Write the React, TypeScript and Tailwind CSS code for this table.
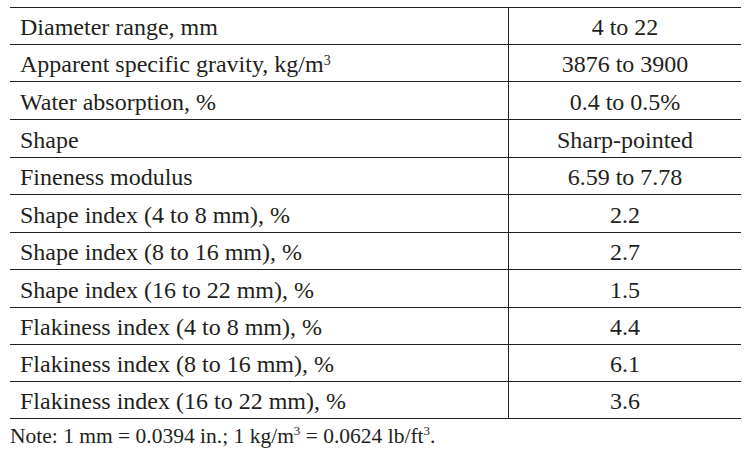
const rows = [
  { label: 'Diameter range, mm', value: '4 to 22', h: 'h-[37px]' },
  { label: 'Apparent specific gravity, kg/m', sup: '3', value: '3876 to 3900', h: 'h-[37px]' },
  { label: 'Water absorption, %', value: '0.4 to 0.5%', h: 'h-[38px]' },
  { label: 'Shape', value: 'Sharp-pointed', h: 'h-[38px]' },
  { label: 'Fineness modulus', value: '6.59 to 7.78', h: 'h-[37px]' },
  { label: 'Shape index (4 to 8 mm), %', value: '2.2', h: 'h-[38px]' },
  { label: 'Shape index (8 to 16 mm), %', value: '2.7', h: 'h-[37px]' },
  { label: 'Shape index (16 to 22 mm), %', value: '1.5', h: 'h-[38px]' },
  { label: 'Flakiness index (4 to 8 mm), %', value: '4.4', h: 'h-[37px]' },
  { label: 'Flakiness index (8 to 16 mm), %', value: '6.1', h: 'h-[37px]' },
  { label: 'Flakiness index (16 to 22 mm), %', value: '3.6', h: 'h-[37px]' },
];

export default function App() {
  return (
    <div className="w-[756px] h-[457px] bg-white text-[#231f20] [font-family:'Liberation_Serif',serif] pt-[7px] pl-[10px]">
      <div className="w-[731px] border-t border-[#231f20]">
        {rows.map((r) => (
          <div key={r.label} className={`flex border-b border-[#231f20] ${r.h}`}>
            <div className="w-[499px] border-r border-[#231f20] pl-[10px] flex items-center text-[24px] leading-none pt-[2px] whitespace-nowrap">
              <span>
                {r.label}
                {r.sup && <sup className="text-[14px]">{r.sup}</sup>}
              </span>
            </div>
            <div className="flex-1 flex items-center justify-center text-[24px] leading-none pt-[2px] whitespace-nowrap">
              {r.value}
            </div>
          </div>
        ))}
      </div>
      <p className="text-[21.5px] leading-none mt-[7px] whitespace-nowrap">
        Note: 1 mm = 0.0394 in.; 1 kg/m<sup className="text-[13px] -top-[8px]">3</sup> = 0.0624 lb/ft<sup className="text-[13px] -top-[8px]">3</sup>.
      </p>
    </div>
  );
}
